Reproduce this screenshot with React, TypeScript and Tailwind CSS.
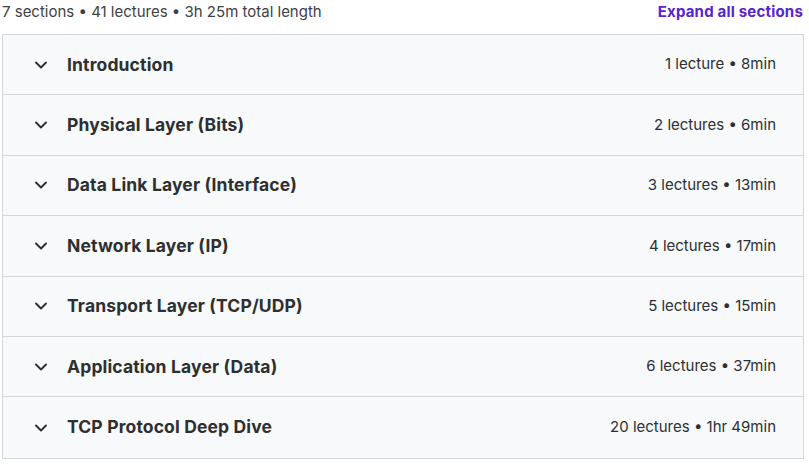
import { ChevronDown } from "lucide-react";

const sections = [
  { title: "Introduction", meta: "1 lecture • 8min" },
  { title: "Physical Layer (Bits)", meta: "2 lectures • 6min" },
  { title: "Data Link Layer (Interface)", meta: "3 lectures • 13min" },
  { title: "Network Layer (IP)", meta: "4 lectures • 17min" },
  { title: "Transport Layer (TCP/UDP)", meta: "5 lectures • 15min" },
  { title: "Application Layer (Data)", meta: "6 lectures • 37min" },
  { title: "TCP Protocol Deep Dive", meta: "20 lectures • 1hr 49min" },
];

const CourseContent = () => (
  <div className="w-[809px] h-[464px] bg-white font-['Inter',sans-serif] text-[#2d2f31]">
    {/* Summary bar */}
    <div className="flex items-center justify-between h-[25px] pl-[2px] pr-[6px]">
      <span className="text-[15px] text-[#3e4143]">
        7 sections • 41 lectures • 3h 25m total length
      </span>
      <button className="text-[15px] font-bold text-[#5624d0] tracking-[0.2px]">
        Expand all sections
      </button>
    </div>

    {/* Section list */}
    <div className="mt-[9px] ml-[2px] w-[802px] border border-[#d1d7dc]">
      {sections.map((s, i) => (
        <div
          key={i}
          className={`flex items-center h-[60.4px] bg-[#f7f9fa] pl-[28px] pr-[27px] ${
            i < sections.length - 1 ? "border-b border-[#d1d7dc]" : ""
          }`}
        >
          <ChevronDown className="w-[20px] h-[20px] text-[#2d2f31]" strokeWidth={2.3} />
          <span className="ml-[16px] text-[17.5px] font-bold tracking-[0.15px]">
            {s.title}
          </span>
          <span className="ml-auto text-[15px]">{s.meta}</span>
        </div>
      ))}
    </div>
  </div>
);

export default function App() {
  return <CourseContent />;
}
